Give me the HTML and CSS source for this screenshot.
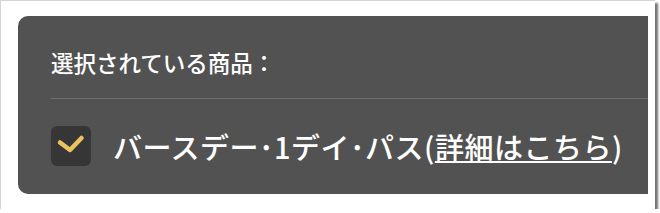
FILE: index.html
```html
<!DOCTYPE html>
<html lang="ja">
<head>
  <meta charset="utf-8">
  <title>選択されている商品</title>
  <link rel="stylesheet" href="styles.css">
</head>
<body>
  <div class="frame">
    <div class="panel">
      <div class="heading">選択されている商品：</div>
      <div class="divider"></div>
      <div class="item">
        <span class="check">
          <svg width="40" height="40" viewBox="0 0 40 40">
            <path d="M9 16.5 L19 24 L30.5 12" fill="none" stroke="#e8c35e" stroke-width="4.5" stroke-linecap="round" stroke-linejoin="round"/>
          </svg>
        </span>
        <span class="name">バースデー･1デイ･パス(<a href="#">詳細はこちら</a>)</span>
      </div>
    </div>
  </div>
</body>
</html>
```

FILE: styles.css
```css
body {
  margin: 0;
  background: #fff;
  font-family: "Noto Sans CJK JP", "Noto Sans", sans-serif;
}

.frame {
  width: 637px;
  height: 193px;
  padding: 15px 0 0 17px;
  background: #fff;
  border-top: 1px solid #d4d4d4;
  border-left: 1px solid #d4d4d4;
  box-shadow: 3px 3px 2px rgba(0,0,0,0.55);
}

.panel {
  width: 597px;
  height: 178px;
  padding-left: 33px;
  background: #525252;
  border-radius: 10px 0 0 10px;
  overflow: hidden;
}

.heading {
  padding-top: 31px;
  color: #fff;
  font-size: 22.5px;
  line-height: 30px;
  font-weight: 500;
}

.divider {
  height: 1px;
  margin-top: 21px;
  background: #6e6e6e;
}

.item {
  display: flex;
  align-items: center;
  gap: 22px;
  margin-top: 27px;
}

.check {
  width: 40px;
  height: 40px;
  border-radius: 6px;
  background: #363636;
}

.check svg {
  display: block;
}

.name {
  color: #fff;
  font-size: 29px;
  line-height: 40px;
  font-weight: 500;
  letter-spacing: 0.5px;
}

.name a {
  color: #fff;
  text-decoration: underline;
  text-decoration-thickness: 2px;
  text-underline-offset: 2px;
}
```
